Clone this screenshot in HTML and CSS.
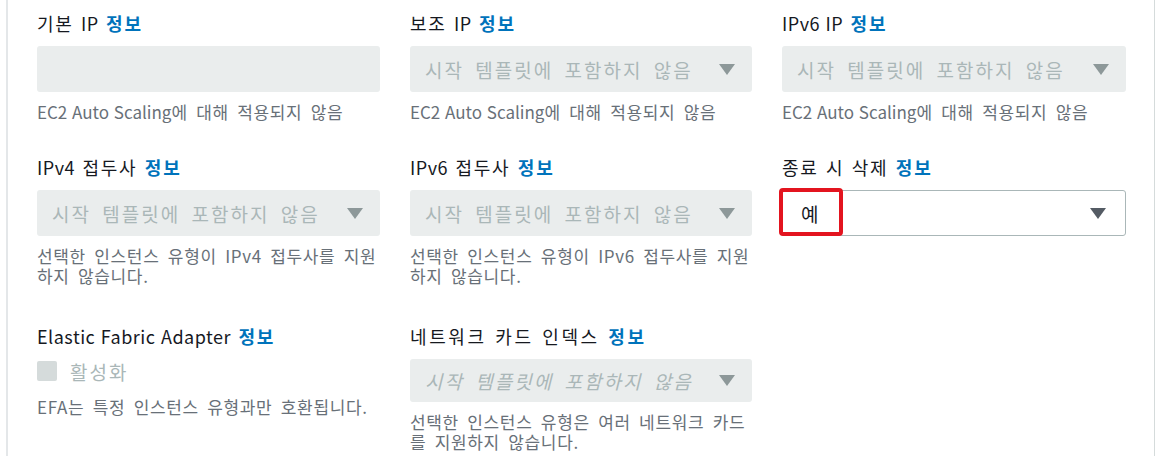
FILE: index.html
```html
<!DOCTYPE html>
<html lang="ko">
<head>
<meta charset="utf-8">
<link rel="stylesheet" href="styles.css">
</head>
<body>
<div class="panel">
  <div class="row row1">
    <div class="field">
      <div class="label">기본 <span class="en">IP</span> <a class="info">정보</a></div>
      <div class="box disabled"></div>
      <div class="help"><span class="en">EC2 Auto Scaling</span>에 대해 적용되지 않음</div>
    </div>
    <div class="field">
      <div class="label">보조 <span class="en">IP</span> <a class="info">정보</a></div>
      <div class="box disabled">
        <span class="ph">시작 템플릿에 포함하지 않음</span>
        <svg class="caret" width="16" height="11" viewBox="0 0 16 11"><polygon points="0,0 16,0 8,11"/></svg>
      </div>
      <div class="help"><span class="en">EC2 Auto Scaling</span>에 대해 적용되지 않음</div>
    </div>
    <div class="field">
      <div class="label"><span class="en">IPv6 IP</span> <a class="info">정보</a></div>
      <div class="box disabled">
        <span class="ph">시작 템플릿에 포함하지 않음</span>
        <svg class="caret" width="16" height="11" viewBox="0 0 16 11"><polygon points="0,0 16,0 8,11"/></svg>
      </div>
      <div class="help"><span class="en">EC2 Auto Scaling</span>에 대해 적용되지 않음</div>
    </div>
  </div>
  <div class="row row2">
    <div class="field">
      <div class="label"><span class="en">IPv4</span> 접두사 <a class="info">정보</a></div>
      <div class="box disabled">
        <span class="ph">시작 템플릿에 포함하지 않음</span>
        <svg class="caret" width="16" height="11" viewBox="0 0 16 11"><polygon points="0,0 16,0 8,11"/></svg>
      </div>
      <div class="help">선택한 인스턴스 유형이 IPv4 접두사를 지원하지 않습니다.</div>
    </div>
    <div class="field">
      <div class="label"><span class="en">IPv6</span> 접두사 <a class="info">정보</a></div>
      <div class="box disabled">
        <span class="ph">시작 템플릿에 포함하지 않음</span>
        <svg class="caret" width="16" height="11" viewBox="0 0 16 11"><polygon points="0,0 16,0 8,11"/></svg>
      </div>
      <div class="help">선택한 인스턴스 유형이 IPv6 접두사를 지원하지 않습니다.</div>
    </div>
    <div class="field">
      <div class="label">종료 시 삭제 <a class="info">정보</a></div>
      <div class="box active">
        <span class="value">예</span>
        <svg class="caret dark" width="16" height="11" viewBox="0 0 16 11"><polygon points="0,0 16,0 8,11"/></svg>
        <span class="highlight"></span>
      </div>
    </div>
  </div>
  <div class="row row3">
    <div class="field">
      <div class="label"><span class="en">Elastic Fabric Adapter</span> <a class="info">정보</a></div>
      <label class="check"><span class="checkbox"></span><span class="check-text">활성화</span></label>
      <div class="help">EFA는 특정 인스턴스 유형과만 호환됩니다.</div>
    </div>
    <div class="field">
      <div class="label wide">네트워크 카드 인덱스 <a class="info">정보</a></div>
      <div class="box disabled short">
        <span class="ph italic">시작 템플릿에 포함하지 않음</span>
        <svg class="caret" width="16" height="11" viewBox="0 0 16 11"><polygon points="0,0 16,0 8,11"/></svg>
      </div>
      <div class="help">선택한 인스턴스 유형은 여러 네트워크 카드를 지원하지 않습니다.</div>
    </div>
    <div class="field"></div>
  </div>
</div>
</body>
</html>
```
FILE: styles.css
```css
html, body {
  margin: 0;
  padding: 0;
  background: #ffffff;
}
body {
  font-family: "Noto Sans CJK KR", "Noto Sans", sans-serif;
  color: #16191f;
}
.panel {
  margin-left: 6px;
  width: 1149px;
  height: 456px;
  box-sizing: border-box;
  border-left: 2px solid #e4e7e9;
  border-right: 1px solid #d5dbdb;
  padding-left: 29px;
}
.row {
  display: grid;
  grid-template-columns: 343px 342px 344px;
  column-gap: 30px;
  align-items: start;
}
.row1 { padding-top: 12px; }
.row2 { padding-top: 34px; }
.row3 { padding-top: 39px; }
.label {
  font-size: 18px;
  line-height: 22px;
  height: 22px;
  letter-spacing: 1.8px;
  word-spacing: 0.5px;
  color: #16191f;
  margin-bottom: 12px;
  white-space: nowrap;
}
.label.wide {
  letter-spacing: 2.6px;
  word-spacing: 1px;
}
.label .en {
  letter-spacing: 0.5px;
  word-spacing: 0;
}
.info {
  color: #0073bb;
  font-weight: 700;
}
.box {
  height: 46px;
  box-sizing: border-box;
  border-radius: 3px;
  display: flex;
  align-items: center;
  justify-content: space-between;
  padding: 0 17px 0 15px;
  position: relative;
}
.box.short { height: 43px; }
.disabled {
  background: #eaeded;
}
.active {
  background: #fff;
  border: 1px solid #aab7b8;
  padding-left: 18px;
  padding-right: 19px;
}
.ph {
  font-size: 19px;
  letter-spacing: 2px;
  word-spacing: 4px;
  color: #aab7b8;
  white-space: nowrap;
}
.italic { font-style: italic; }
.caret {
  fill: #8d9899;
  flex: none;
}
.caret.dark { fill: #545b64; }
.value {
  font-size: 19px;
  color: #16191f;
}
.highlight {
  position: absolute;
  left: -4px;
  top: -3px;
  width: 64px;
  height: 48px;
  box-sizing: border-box;
  border: 4px solid #e3141f;
  border-radius: 4px;
}
.help {
  font-size: 17px;
  line-height: 20px;
  color: #687078;
  margin-top: 10px;
  letter-spacing: 0.65px;
  word-spacing: 3px;
}
.help .en {
  letter-spacing: 0;
  word-spacing: 0;
}
.check + .help { margin-top: 14px; }
.check {
  display: flex;
  align-items: center;
  height: 24px;
  margin-top: 8px;
}
.checkbox {
  width: 20px;
  height: 20px;
  background: #d5dbdb;
  border-radius: 2px;
  margin-right: 13px;
}
.check-text {
  font-size: 19px;
  color: #aab7b8;
  letter-spacing: 2px;
}
```
